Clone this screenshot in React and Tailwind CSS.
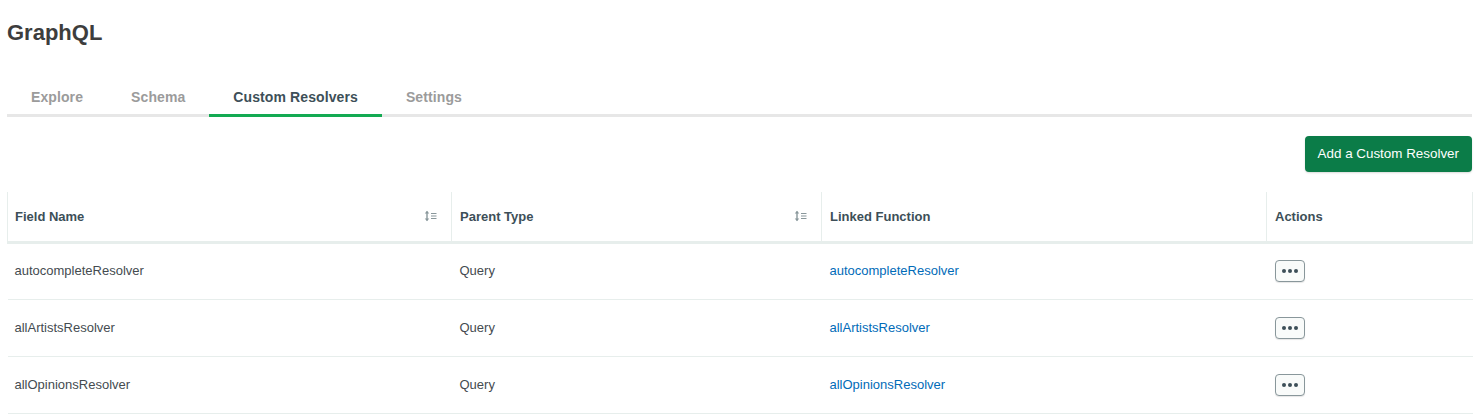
import React from 'react';

const tabs = ['Explore', 'Schema', 'Custom Resolvers', 'Settings'];

const rows = [
  { field: 'autocompleteResolver', parent: 'Query', fn: 'autocompleteResolver' },
  { field: 'allArtistsResolver', parent: 'Query', fn: 'allArtistsResolver' },
  { field: 'allOpinionsResolver', parent: 'Query', fn: 'allOpinionsResolver' },
];

// Sort glyph: up/down arrow plus three short lines
const SortIcon = () => (
  <svg width="13" height="12" viewBox="0 0 13 12" className="text-[#89979b]">
    <path d="M3 1.5v9" stroke="currentColor" strokeWidth="1.4" />
    <path d="M0.8 3.4L3 0.8l2.2 2.6z" fill="currentColor" />
    <path d="M0.8 8.6L3 11.2l2.2-2.6z" fill="currentColor" />
    <path d="M7 3.5h5.5M7 6h5.5M7 8.5h5.5" stroke="currentColor" strokeWidth="1.1" />
  </svg>
);

const HeaderCell = ({ label, sortable, width, first, last }) => (
  <th
    className={`h-[50px] border-l border-[#e7eeec] pr-2 text-left align-middle text-[13px] font-bold text-[#3d4f58] ${
      first ? 'pl-[7px]' : 'pl-2'
    } ${last ? 'border-r' : ''}`}
    style={{ width }}
  >
    <div className="flex items-center justify-between pr-[6px]">
      <span>{label}</span>
      {sortable && <SortIcon />}
    </div>
  </th>
);

export default function App() {
  return (
    <div
      className="bg-white pl-[7px] pr-[11px] pt-[19px] text-[#3d4f58]"
      style={{ fontFamily: '"Liberation Sans", Arial, sans-serif' }}
    >
      <h1 className="text-[22px] font-bold leading-7 text-[#3d3d3d]">GraphQL</h1>

      {/* Tabs */}
      <div className="mt-[40px] flex border-b-[3px] border-[#e7e7e7]">
        {tabs.map((tab) => (
          <div
            key={tab}
            className={`-mb-[3px] border-b-[3px] px-6 pb-[7px] text-[14px] font-bold leading-5 tracking-[0.1px] ${
              tab === 'Custom Resolvers'
                ? 'border-[#13aa52] text-[#3d4f58]'
                : 'border-transparent text-[#9b9b9b]'
            }`}
          >
            {tab}
          </div>
        ))}
      </div>

      <div className="mt-[19px] flex justify-end">
        <button className="h-9 rounded bg-[#0b7c48] px-[13px] text-[13.4px] text-white shadow-[0_1px_2px_rgba(0,0,0,0.15)]">
          Add a Custom Resolver
        </button>
      </div>

      {/* Resolvers table */}
      <table className="mt-5 w-full table-fixed border-collapse">
        <thead>
          <tr className="border-b-[3px] border-[#e7eeec]">
            <HeaderCell label="Field Name" sortable width={444} first />
            <HeaderCell label="Parent Type" sortable width={370} />
            <HeaderCell label="Linked Function" width={445} />
            <HeaderCell label="Actions" width={206} last />
          </tr>
        </thead>
        <tbody>
          {rows.map((row) => (
            <tr key={row.field} className="h-[57px] border-b border-[#e7eeec] text-[13px]">
              <td className="pl-[7px] pr-2 text-[#444b50]">{row.field}</td>
              <td className="px-2 text-[#444b50]">{row.parent}</td>
              <td className="px-2">
                <a className="text-[#016bb8]">{row.fn}</a>
              </td>
              <td className="px-2">
                <button className="flex h-[22px] w-[30px] items-center justify-center gap-[2px] rounded border border-[#89979b] bg-[#f9fbfa] shadow-[0_1px_1px_rgba(0,0,0,0.1)]">
                  <span className="h-[4px] w-[4px] rounded-full bg-[#3d4f58]" />
                  <span className="h-[4px] w-[4px] rounded-full bg-[#3d4f58]" />
                  <span className="h-[4px] w-[4px] rounded-full bg-[#3d4f58]" />
                </button>
              </td>
            </tr>
          ))}
        </tbody>
      </table>
    </div>
  );
}
